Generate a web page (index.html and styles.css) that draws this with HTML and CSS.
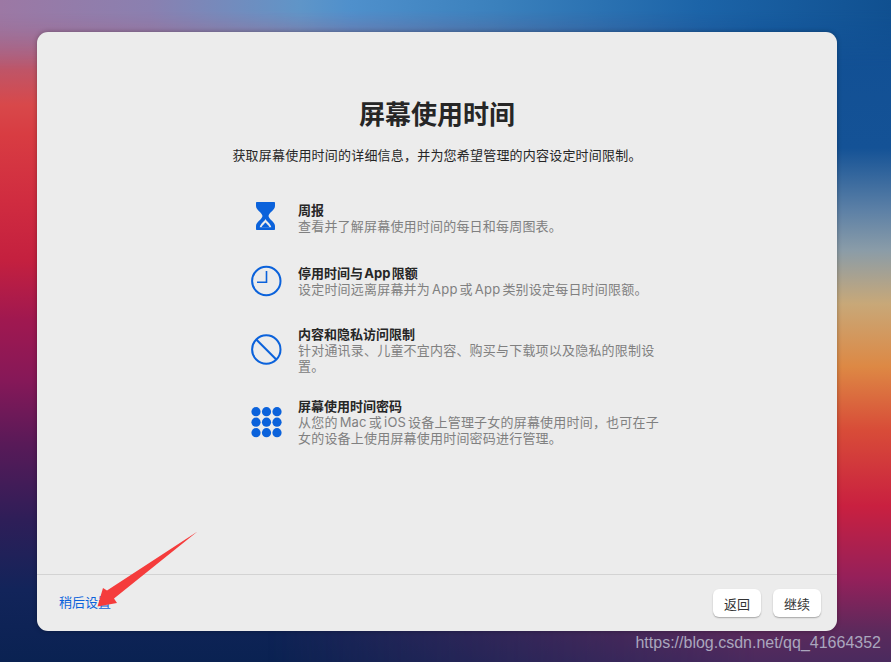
FILE: index.html
```html
<!DOCTYPE html>
<html lang="zh-CN">
<head>
<meta charset="utf-8">
<title>屏幕使用时间</title>
<link rel="stylesheet" href="styles.css">
</head>
<body>
<div class="window">
  <main class="main">
    <h1 class="title">屏幕使用时间</h1>
    <p class="subtitle">获取屏幕使用时间的详细信息，并为您希望管理的内容设定时间限制。</p>
    <div class="features">
      <div class="feature f1">
        <svg class="icon" viewBox="0 0 32 32"><path fill="#0b62db" d="M6 0h17c.6 0 1 .4 1 1v3c0 4-6 6.500-6.500 10 .5 3.500 6.500 6 6.500 10v3c0 .6-.4 1-1 1H6c-.6 0-1-.4-1-1v-3c0-4 6-6.500 6.500-10C11 10.500 5 8 5 4V1c0-.6.4-1 1-1z"/><path fill="#ececec" d="M14.500 17c.8 2.200 5 4.500 5.800 8.200H8.700c.8-3.700 5-6 5.800-8.200z"/><path fill="#0b62db" d="M14.500 20.500c1.200 1.500 3 2.800 4 4.700h-8c1-1.900 2.800-3.200 4-4.700z"/></svg>
        <div class="text">
          <div class="name">周报</div>
          <div class="desc">查看并了解屏幕使用时间的每日和每周图表。</div>
        </div>
      </div>
      <div class="feature f2">
        <svg class="icon" viewBox="0 0 32 32"><circle cx="15.300" cy="16" r="14.200" fill="none" stroke="#0b62db" stroke-width="2"/><path d="M15.500 6v11.200H6" fill="none" stroke="#0b62db" stroke-width="1.600"/></svg>
        <div class="text">
          <div class="name">停用时间与 App 限额</div>
          <div class="desc">设定时间远离屏幕并为 App 或 App 类别设定每日时间限额。</div>
        </div>
      </div>
      <div class="feature f3">
        <svg class="icon" viewBox="0 0 32 32"><circle cx="15.300" cy="15.500" r="14.200" fill="none" stroke="#0b62db" stroke-width="2"/><path d="M5.300 5.500l20 20" fill="none" stroke="#0b62db" stroke-width="2"/></svg>
        <div class="text">
          <div class="name">内容和隐私访问限制</div>
          <div class="desc">针对通讯录、儿童不宜内容、购买与下载项以及隐私的限制设置。</div>
        </div>
      </div>
      <div class="feature f4">
        <svg class="icon" viewBox="0 0 32 32" fill="#0b62db"><circle cx="5" cy="5.700" r="4.600"/><circle cx="15.500" cy="5.700" r="4.600"/><circle cx="26" cy="5.700" r="4.600"/><circle cx="5" cy="16.200" r="4.600"/><circle cx="15.500" cy="16.200" r="4.600"/><circle cx="26" cy="16.200" r="4.600"/><circle cx="5" cy="26.700" r="4.600"/><circle cx="15.500" cy="26.700" r="4.600"/><circle cx="26" cy="26.700" r="4.600"/></svg>
        <div class="text">
          <div class="name">屏幕使用时间密码</div>
          <div class="desc">从您的 Mac 或 iOS 设备上管理子女的屏幕使用时间，也可在子女的设备上使用屏幕使用时间密码进行管理。</div>
        </div>
      </div>
    </div>
  </main>
  <footer class="footer">
    <a class="later">稍后设置</a>
    <div class="buttons">
      <button class="btn">返回</button>
      <button class="btn">继续</button>
    </div>
  </footer>
</div>
<svg class="arrow" viewBox="0 0 891 662" width="891" height="662"><path fill="#f53c3c" d="M197.500 531.500L114 598.500l3 4.500-19.500 3.500L103 588l4 2.500z"/></svg>
<div class="watermark">https://blog.csdn.net/qq_41664352</div>
</body>
</html>
```
FILE: styles.css
```css
* { box-sizing: border-box; }
html, body { margin: 0; height: 662px; overflow: hidden; }
body {
  position: relative;
  padding: 32px 0 0 37px;
  font-family: Inter, "Noto Sans CJK SC", sans-serif;
  background: linear-gradient(180deg, #8f78a6 0, #ab5f7e 42px, #d8484a 105px, #d83c42 135px, #d02c40 200px, #c4203f 260px, #a01850 320px, #861858 380px, #581a58 445px, #2e1e58 520px, #12245a 590px, #0a2252 662px);
}
body::before, body::after {
  content: "";
  position: absolute;
  inset: 0;
  z-index: -1;
}
body::before {
  background: linear-gradient(180deg, #114f94 0, #145296 148px, #5c80a6 210px, #8a9ca8 250px, #c8a878 304px, #dd8844 367px, #d84c38 430px, #c92040 506px, #95205a 578px, #5a2a5c 633px, #4a2a5e 662px);
  -webkit-mask-image: linear-gradient(90deg, transparent 30%, #000 85%);
  mask-image: linear-gradient(90deg, transparent 30%, #000 85%);
}
body::after {
  background: linear-gradient(90deg, #9c78a4 0, #8a80b0 150px, #5f95c8 300px, #4f90cc 350px, #3a80bc 500px, #1c64a8 700px, #105090 891px);
  -webkit-mask-image: linear-gradient(180deg, #000 0, #000 10px, transparent 70px);
  mask-image: linear-gradient(180deg, #000 0, #000 10px, transparent 70px);
}
.window {
  width: 800px;
  height: 599px;
  background: #ececec;
  border-radius: 11px;
  display: flex;
  flex-direction: column;
  box-shadow: 0 0 5px rgba(0,0,0,.3);
}
.main {
  flex: 1;
  display: flex;
  flex-direction: column;
  align-items: center;
  padding-top: 65px;
}
.title {
  margin: 0;
  font-size: 26px;
  line-height: 36px;
  font-weight: 700;
  color: #262626;
}
.subtitle {
  margin: 12px 0 0;
  font-size: 13px;
  line-height: 20px;
  letter-spacing: .2px;
  color: #262626;
}
.features {
  align-self: flex-start;
  margin: 37px 0 0 214px;
  width: 408px;
  display: flex;
  flex-direction: column;
}
.feature { display: flex; align-items: center; gap: 15px; }
.f2 { margin-top: 31px; }
.f3 { margin-top: 29px; }
.f4 { margin-top: 24px; }
.icon { width: 32px; height: 32px; flex: none; }
.name {
  font-size: 13px;
  line-height: 16px;
  font-weight: 700;
  word-spacing: -1.800px;
  color: #262626;
}
.desc {
  font-size: 13px;
  line-height: 16px;
  letter-spacing: .2px;
  word-spacing: -1.800px;
  color: #808080;
}
.footer {
  flex: none;
  height: 57px;
  border-top: 1px solid #d3d3d3;
  display: flex;
  align-items: center;
  justify-content: space-between;
  padding: 0 16px 0 22px;
}
.later { font-size: 13px; color: #0b62db; margin-bottom: 3px; }
.buttons { display: flex; gap: 12px; }
.btn {
  width: 48px;
  height: 28px;
  padding: 0;
  border: 0;
  border-radius: 6px;
  background: #fff;
  box-shadow: 0 1px 1.500px rgba(0,0,0,.3);
  font: 13px Inter, "Noto Sans CJK SC", sans-serif;
  color: #333;
}
.arrow { position: absolute; left: 0; top: 0; pointer-events: none; }
.watermark {
  position: absolute;
  right: 10px;
  bottom: 10px;
  font: 16px/19px "Liberation Sans", sans-serif;
  color: #aaa6bd;
}
```
